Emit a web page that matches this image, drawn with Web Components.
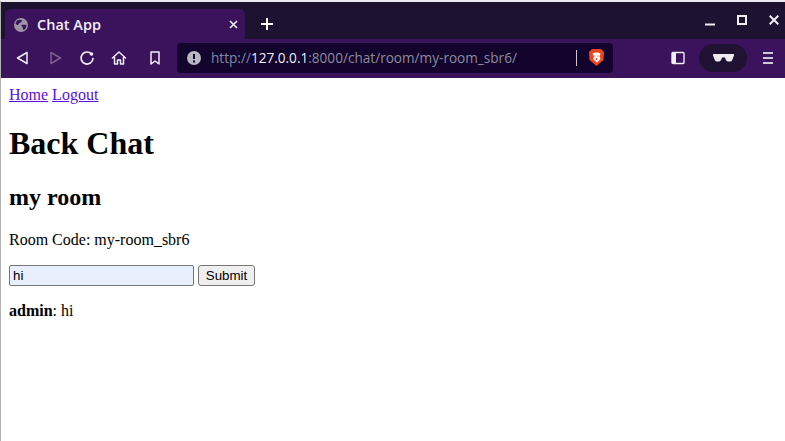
<!DOCTYPE html>
<html><head><meta charset="utf-8"><style>
html,body{margin:0;padding:0;height:100%;overflow:hidden;background:#fff}
</style></head><body>
<browser-window>
  <tab-strip slot="tabs"></tab-strip>
  <nav-toolbar slot="toolbar"></nav-toolbar>
  <chat-page></chat-page>
</browser-window>
<script>
function def(name,html){
  customElements.define(name,class extends HTMLElement{
    constructor(){super();const s=this.attachShadow({mode:'open'});s.innerHTML=html;}
  });
}
def('browser-window',`<style>
:host{display:flex;flex-direction:column;width:785px;height:441px;box-sizing:border-box;border-left:1px solid #b0b0b0;border-top:2px solid #eceaec;background:#fff}
.page{flex:1;min-height:0}
</style><slot name="tabs"></slot><slot name="toolbar"></slot><div class="page"><slot></slot></div>`);

def('tab-strip',`<style>
:host{display:flex;height:37px;background:#1d1230;font:600 14px "Open Sans","Noto Sans",sans-serif;color:#fff;align-items:flex-end;flex:none}
.tab{width:240px;height:30px;margin-left:4px;background:#3b135c;border-radius:6px 6px 0 0;display:flex;align-items:center;box-sizing:border-box;padding:0 7px 0 9px;gap:9px}
.t{flex:1;color:#f3effa;font-size:14.5px;font-weight:600}
svg{display:block}
.plus{margin:0 0 0 16px;align-self:center;position:relative;top:3px}
.sp{flex:1}
.win{display:flex;align-items:center;align-self:center;gap:22px;padding-right:6px;margin-top:-1px}
</style>
<div class="tab">
<svg style="margin-top:1px" width="14" height="14" viewBox="0 0 14 14"><circle cx="7" cy="7" r="7" fill="#9b95a6"/><path d="M3 2.500c2-1 4-1 5 0 .5 1-1.500 2-2.500 2.500-1 .5-.5 1.500-1.500 2C3 7.500 2 6 1.500 5zM7.500 7c1.500-.5 3.500-.5 5 0 0 2-1 4-2.500 5-1.500-.5-1-2-1.500-3C8 8 7 8 7.500 7z" fill="#3b135c"/></svg>
<span class="t">Chat App</span>
<svg width="9" height="9" viewBox="0 0 9 9"><path d="M1 1l7 7M8 1l-7 7" stroke="#efecf4" stroke-width="1.700" fill="none"/></svg>
</div>
<svg class="plus" width="12" height="12" viewBox="0 0 12 12"><path d="M6 0v12M0 6h12" stroke="#fff" stroke-width="2"/></svg>
<div class="sp"></div>
<div class="win">
<svg width="10" height="11" viewBox="0 0 10 11"><path d="M0 9.500h10" stroke="#eee" stroke-width="2"/></svg>
<svg width="10" height="10" viewBox="0 0 10 10"><rect x="1" y="1" width="8" height="8" fill="none" stroke="#eee" stroke-width="2"/></svg>
<svg width="10" height="10" viewBox="0 0 10 10"><path d="M.7.7l8.600 8.600M9.300.7L.7 9.300" stroke="#eee" stroke-width="2"/></svg>
</div>`);

def('nav-toolbar',`<style>
:host{display:flex;align-items:center;height:39px;background:#3b135c;flex:none;font:14px "Open Sans","Noto Sans",sans-serif;box-sizing:border-box;padding:0 0 2px 0}
svg{display:block;flex:none}
.i{fill:none;stroke:#f0edf5;stroke-width:1.500;stroke-linejoin:round;stroke-linecap:round}
.nav{display:flex;align-items:center;gap:16px;padding-left:14px}
.url{width:436px;height:30px;margin-left:15px;background:#12042c;border-radius:4px;display:flex;align-items:center;box-sizing:border-box;padding:0 8px 0 10px}
.txt{margin-left:10px;flex:1;color:#8d8a9d;white-space:nowrap;font-size:13.6px}
.txt b{font-weight:400;color:#f0eef5}
.txt i{font-style:normal;color:#7f8aa8}
.sep{width:1px;height:16px;background:#c9c6d0;margin-right:11px}
.right{display:flex;align-items:center;margin-left:58px}
.pill{width:48px;height:28px;border-radius:14px;background:#1f1233;display:flex;align-items:center;justify-content:center;margin:0 16px 0 14px}
</style>
<div class="nav">
<svg class="i" width="14" height="16" viewBox="0 0 14 16"><path d="M12 2.500v11L2.500 8z"/></svg>
<svg class="i" style="opacity:.35;margin-left:4px" width="14" height="16" viewBox="0 0 14 16"><path d="M2 2.500v11L11.500 8z"/></svg>
<svg class="i" width="16" height="16" viewBox="0 0 16 16"><path d="M12.500 4A6 6 0 1 0 14 8.500" stroke-width="1.700"/><circle cx="12.500" cy="4" r="1.800" fill="#f0edf5" stroke="none"/></svg>
<svg class="i" width="16" height="16" viewBox="0 0 16 16"><path d="M1.500 8L8 2l6.500 6M3.500 7v7h3v-4h3v4h3V7"/></svg>
<svg class="i" width="14" height="16" viewBox="0 0 14 16" style="margin-left:5px"><path d="M3 2h8v12l-4-3-4 3z"/></svg>
</div>
<div class="url">
<svg width="14" height="14" viewBox="0 0 14 14"><circle cx="7" cy="7" r="7" fill="#b9b6c2"/><path d="M7 3v5M7 9.500v2" stroke="#12042c" stroke-width="2"/></svg>
<span class="txt"><i>http://</i><b>127.0.0.1</b>:8000/chat/room/my-room_sbr6/</span>
<span class="sep"></span>
<svg width="17" height="19" viewBox="0 0 17 19"><path d="M4 1h9l3 3-.5 8L8.500 18 1.500 12 1 4z" fill="#f0441f"/><path d="M4.500 5.500l2.500-1h3l2.500 1-1 3.500 1 2-3.500 3.500L5 11l1-2z" fill="#fff"/><path d="M6.500 8h1.300M9.200 8h1.300M8.500 10v2" stroke="#f0441f" stroke-width="1.200"/></svg>
</div>
<div class="right">
<svg class="i" width="14" height="14" viewBox="0 0 14 14"><rect x="1" y="1.500" width="12" height="11" rx="1" stroke-width="1.400"/><rect x="1" y="1.500" width="4" height="11" fill="#f0edf5" stroke="none"/></svg>
<div class="pill"><svg width="21" height="9" viewBox="0 0 21 9"><path d="M0 1h21v1.500L19 7.500q-.5 1-2 1h-2q-2 0-3-4h-3q-1 4-3 4H4q-1.500 0-2-1L0 2.500z" fill="#eeeaf0"/></svg></div>
<svg width="10" height="12" viewBox="0 0 10 12"><path d="M0 1h10M0 6h10M0 11h10" stroke="#cfc9da" stroke-width="1.800"/></svg>
</div>`);

def('chat-page',`<style>
:host{display:block;padding:8px;font:16px "Liberation Serif","Times New Roman",serif;color:#000}
a{color:#5a10e0;text-decoration:underline}
h1{font-size:32px;margin:21.44px 0}
h2{font-size:24px;margin:19.92px 0}
p{margin:16px 0}
form{display:flex;align-items:center;gap:4px;margin:0}
input{box-sizing:border-box;width:185px;height:21px;font:13.333px "Liberation Sans",Arial,sans-serif;padding:1px 3px;border:1px solid #767676;border-radius:2px;background:#e8f0fe;color:#000;outline:none;margin:0}
button{box-sizing:border-box;height:21px;width:57px;font:13.333px "Liberation Sans",Arial,sans-serif;padding:1px 6px;border:1px solid #767676;border-radius:3px;background:#efefef;color:#000;margin:0}
</style>
<div><a href="#">Home</a> <a href="#">Logout</a></div>
<h1>Back Chat</h1>
<h2>my room</h2>
<p>Room Code: my-room_sbr6</p>
<form onsubmit="return false"><input value="hi"><button type="button">Submit</button></form>
<p><b>admin</b>: hi</p>`);
</script>
</body></html>
